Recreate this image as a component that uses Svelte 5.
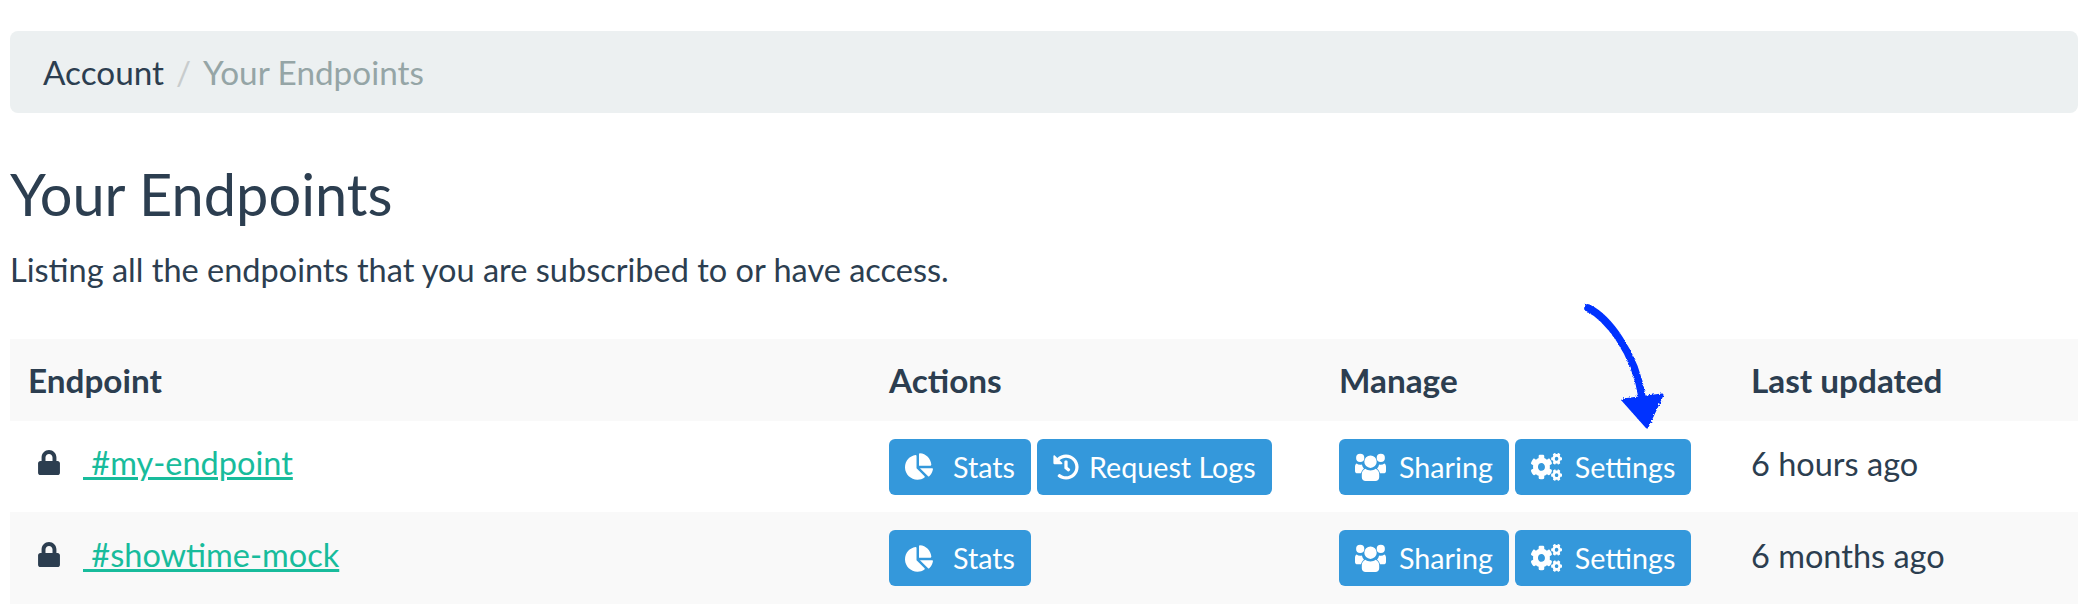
<script>
	const pie = { box: '0 0 544 512', w: 28, h: 27, gap: 20, d: 'M527.79 288H290.5l158.03 158.03c6.04 6.04 15.98 6.53 22.19.68 38.7-36.46 65.32-85.61 73.13-140.86 1.34-9.46-6.51-17.85-16.06-17.85zm-15.83-64.8C503.72 103.74 408.26 8.28 288.8.04 279.68-.59 272 7.1 272 16.24V240h223.77c9.14 0 16.82-7.68 16.19-16.8zM224 288V50.71c0-9.55-8.39-17.4-17.84-16.06C86.99 51.49-4.1 155.6.14 280.37 4.5 408.51 114.83 513.59 243.03 511.98c50.4-.63 96.97-16.87 135.26-44.03 7.9-5.6 8.42-17.23 1.57-24.08L224 288z' };
	const history = { box: '0 0 512 512', w: 26, h: 26, gap: 10, d: 'M504 255.531c.253 136.64-111.18 248.372-247.82 248.468-59.015.042-113.223-20.53-155.822-54.911-11.077-8.94-11.905-25.541-1.839-35.607l11.267-11.267c8.609-8.609 22.353-9.551 31.891-1.984C173.062 425.135 212.781 440 256 440c101.705 0 184-82.311 184-184 0-101.705-82.311-184-184-184-48.814 0-93.149 18.969-126.068 49.932l50.754 50.754c10.08 10.08 2.941 27.314-11.313 27.314H24c-8.837 0-16-7.163-16-16V38.627c0-14.254 17.234-21.393 27.314-11.314l49.372 49.372C129.209 34.136 189.552 8 256 8c136.81 0 247.747 110.78 248 247.531zm-180.912 78.784l9.823-12.63c8.138-10.463 6.253-25.542-4.21-33.679L288 256.349V152c0-13.255-10.745-24-24-24h-16c-13.255 0-24 10.745-24 24v135.651l65.409 50.874c10.463 8.137 25.541 6.253 33.679-4.21z' };
	// drawn to the taller proportions of the original icon
	const users = { box: '0 0 31 28', w: 31, h: 28, gap: 13, d: 'M15.5 2.5a6.2 6.2 0 1 1 0 12.4a6.2 6.2 0 0 1 0-12.4zM5.2 0.8a4.1 4.1 0 1 1 0 8.2a4.1 4.1 0 0 1 0-8.2zM25.8 0.8a4.1 4.1 0 1 1 0 8.2a4.1 4.1 0 0 1 0-8.2zM1.6 10.6c1 .8 2.2 1.2 3.6 1.2c.6 0 1.2-.1 1.7-.2c.3 1.6 1 3 2.1 4.1c-1.5 1-2.6 2.6-3 4.6H2.4C1 20.300 0 19.300 0 17.900v-4.200c0-1.300.6-2.400 1.600-3.100zM29.400 10.600c1 .7 1.600 1.800 1.600 3.100v4.200c0 1.400-1 2.400-2.400 2.400h-3.600c-.4-2-1.500-3.600-3-4.600c1.100-1.100 1.800-2.500 2.100-4.100c.5.1 1.100.2 1.700.2c1.400 0 2.600-.4 3.600-1.200zM10.300 15.800c1.400 1.100 3.200 1.700 5.200 1.700s3.800-.6 5.200-1.700c2.200 1 3.500 3 3.500 5.500v2.900c0 2.200-1.600 3.800-3.800 3.800H10.600c-2.200 0-3.800-1.600-3.800-3.800v-2.900c0-2.500 1.300-4.500 3.500-5.500z' };
	const cogs = { box: '0 0 640 512', w: 31, h: 28, gap: 13, fit: 'none', d: 'M512.1 191l-8.2 14.3c-3 5.3-9.4 7.5-15.1 5.4-11.8-4.4-22.6-10.7-32.1-18.6-4.6-3.8-5.8-10.5-2.8-15.7l8.2-14.3c-6.9-8-12.3-17.3-15.9-27.4h-16.5c-6 0-11.2-4.3-12.2-10.3-2-12-2.1-24.6 0-37.1 1-6 6.2-10.4 12.2-10.4h16.5c3.6-10.1 9-19.4 15.9-27.4l-8.2-14.3c-3-5.2-1.9-11.9 2.8-15.7 9.5-7.9 20.4-14.2 32.1-18.6 5.7-2.1 12.1.1 15.1 5.4l8.2 14.3c10.5-1.9 21.2-1.9 31.7 0L552 6.3c3-5.3 9.4-7.5 15.1-5.4 11.8 4.4 22.6 10.7 32.1 18.6 4.6 3.8 5.8 10.5 2.8 15.7l-8.2 14.3c6.9 8 12.3 17.3 15.9 27.4h16.5c6 0 11.2 4.3 12.2 10.3 2 12 2.1 24.6 0 37.1-1 6-6.2 10.4-12.2 10.4h-16.5c-3.6 10.1-9 19.4-15.9 27.4l8.2 14.3c3 5.2 1.9 11.9-2.8 15.7-9.5 7.9-20.4 14.2-32.1 18.6-5.7 2.1-12.1-.1-15.1-5.4l-8.2-14.3c-10.4 1.9-21.2 1.9-31.7 0zm-10.5-58.8c38.5 29.6 82.4-14.3 52.8-52.8-38.5-29.7-82.4 14.3-52.8 52.8zM386.3 286.1l33.7 16.8c10.1 5.8 14.5 18.1 10.5 29.1-8.9 24.2-26.4 46.4-42.6 65.8-7.4 8.9-20.2 11.1-30.3 5.3l-29.1-16.8c-16 13.7-34.6 24.6-54.9 31.7v33.6c0 11.6-8.3 21.6-19.7 23.6-24.6 4.2-50.4 4.4-75.9 0-11.5-2-20-11.9-20-23.6V418c-20.3-7.2-38.9-18-54.9-31.7L74 403c-10 5.8-22.9 3.6-30.3-5.3-16.2-19.4-33.3-41.6-42.2-65.7-4-10.9.4-23.2 10.5-29.1l33.3-16.8c-3.9-20.9-3.9-42.4 0-63.4L12 205.8c-10.1-5.8-14.6-18.1-10.5-29 8.9-24.2 26-46.4 42.2-65.8 7.4-8.9 20.2-11.1 30.3-5.3l29.1 16.8c16-13.7 34.6-24.6 54.9-31.7V57.1c0-11.5 8.2-21.5 19.6-23.5 24.6-4.2 50.5-4.4 76-.1 11.5 2 20 11.9 20 23.6v33.6c20.3 7.2 38.9 18 54.9 31.7l29.1-16.8c10-5.8 22.9-3.6 30.3 5.3 16.2 19.4 33.2 41.6 42.1 65.8 4 10.9.1 23.2-10 29.1l-33.7 16.8c3.9 21 3.9 42.5 0 63.5zm-117.6 21.1c59.2-77-28.7-164.9-105.7-105.7-59.2 77 28.7 164.9 105.7 105.7zm243.4 182.7l-8.2 14.3c-3 5.3-9.4 7.5-15.1 5.4-11.8-4.4-22.6-10.7-32.1-18.6-4.6-3.8-5.8-10.5-2.8-15.7l8.2-14.3c-6.9-8-12.3-17.3-15.9-27.4h-16.5c-6 0-11.2-4.3-12.2-10.3-2-12-2.1-24.6 0-37.1 1-6 6.2-10.4 12.2-10.4h16.5c3.6-10.1 9-19.4 15.9-27.4l-8.2-14.3c-3-5.2-1.9-11.9 2.8-15.7 9.5-7.9 20.4-14.2 32.1-18.6 5.7-2.1 12.1.1 15.1 5.4l8.2 14.3c10.5-1.9 21.2-1.9 31.7 0l8.2-14.3c3-5.3 9.4-7.5 15.1-5.4 11.8 4.4 22.6 10.7 32.1 18.6 4.6 3.8 5.8 10.5 2.8 15.7l-8.2 14.3c6.9 8 12.3 17.3 15.9 27.4h16.5c6 0 11.2 4.3 12.2 10.3 2 12 2.1 24.6 0 37.1-1 6-6.2 10.4-12.2 10.4h-16.5c-3.6 10.1-9 19.4-15.9 27.4l8.2 14.3c3 5.2 1.9 11.9-2.8 15.7-9.5 7.9-20.4 14.2-32.1 18.6-5.7 2.1-12.1-.1-15.1-5.4l-8.2-14.3c-10.4 1.9-21.2 1.9-31.7 0zM501.6 431c38.5 29.6 82.4-14.3 52.8-52.8-38.5-29.6-82.4 14.3-52.8 52.8z' };
	const lock = 'M400 224h-24v-72C376 68.2 307.8 0 224 0S72 68.2 72 152v72H48c-26.5 0-48 21.5-48 48v192c0 26.5 21.5 48 48 48h352c26.5 0 48-21.5 48-48V272c0-26.5-21.5-48-48-48zm-104 0H152v-72c0-39.7 32.3-72 72-72s72 32.3 72 72v72z';

	const endpoints = [
		{ name: '#my-endpoint', updated: '6 hours ago', actions: [{ label: 'Stats', icon: pie }, { label: 'Request Logs', icon: history }] },
		{ name: '#showtime-mock', updated: '6 months ago', actions: [{ label: 'Stats', icon: pie }] },
	];
	const manage = [{ label: 'Sharing', icon: users }, { label: 'Settings', icon: cogs }];
</script>

{#snippet btn(b)}
	<a class="btn" href="#top">
		<svg viewBox={b.icon.box} preserveAspectRatio={b.icon.fit ?? 'xMidYMid meet'} style="width: {b.icon.w}px; height: {b.icon.h}px; margin-right: {b.icon.gap}px"><path d={b.icon.d} /></svg>{b.label}
	</a>
{/snippet}

<div class="page">
	<nav class="crumbs">
		<a href="#top">Account</a>
		<span class="sep">/</span>
		<span class="here">Your Endpoints</span>
	</nav>

	<h1>Your Endpoints</h1>
	<p class="lead">Listing all the endpoints that you are subscribed to or have access.</p>

	<table>
		<thead>
			<tr>
				<th class="c1">Endpoint</th>
				<th class="c2">Actions</th>
				<th class="c3">Manage</th>
				<th>Last updated</th>
			</tr>
		</thead>
		<tbody>
			{#each endpoints as ep}
				<tr>
					<td>
						<div class="name">
							<svg class="lock" viewBox="0 0 448 512"><path d={lock} /></svg>
							<a href="#top">&nbsp;{ep.name}</a>
						</div>
					</td>
					<td><div class="btns">{#each ep.actions as b}{@render btn(b)}{/each}</div></td>
					<td><div class="btns">{#each manage as b}{@render btn(b)}{/each}</div></td>
					<td class="when">{ep.updated}</td>
				</tr>
			{/each}
		</tbody>
	</table>

	<!-- hand drawn annotation over the table -->
	<svg class="arrow" viewBox="0 0 110 140" width="110" height="140">
		<defs>
			<filter id="rough" x="-10%" y="-10%" width="120%" height="120%">
				<feTurbulence type="fractalNoise" baseFrequency="0.9" numOctaves="2" seed="4" />
				<feDisplacementMap in="SourceGraphic" scale="4" />
			</filter>
		</defs>
		<g filter="url(#rough)" fill="#0433ff" stroke="#0433ff" stroke-linejoin="round" stroke-linecap="round">
			<path d="M11 11 C30 20 58 55 65 100" fill="none" stroke-width="7.5" />
			<path d="M46 103 L85 98 L70 130 Z" stroke-width="3" />
		</g>
	</svg>
</div>

<style>
	:global(body) {
		margin: 0;
		background: #fff;
		font-family: Lato, "Liberation Sans", sans-serif;
		color: #2c3e50;
	}
	.page {
		position: relative;
		padding: 31px 0 0 10px;
		height: 577px;
		overflow: hidden;
	}
	.crumbs {
		display: flex;
		align-items: center;
		gap: 12px;
		width: 2035px;
		height: 82px;
		padding-left: 33px;
		background: #ecf0f1;
		border-radius: 8px;
		font-size: 33.3px;
	}
	.crumbs a {
		color: #2c3e50;
		text-decoration: none;
	}
	.sep {
		color: #c8cccd;
	}
	.here {
		color: #95a5a6;
	}
	h1 {
		margin: 50px 0 0;
		font-size: 57.7px;
		font-weight: 400;
		line-height: 62px;
	}
	.lead {
		margin: 25px 0 0;
		font-size: 32.5px;
		line-height: 40px;
	}
	table {
		width: 2068px;
		margin-top: 49px;
		border-collapse: collapse;
		table-layout: fixed;
		font-size: 32.5px;
	}
	th {
		box-sizing: border-box;
		height: 82px;
		padding: 0 0 0 18px;
		background: #f9f9f9;
		text-align: left;
		font-size: 33.3px;
		font-weight: 700;
	}
	td {
		box-sizing: border-box;
		padding: 0 0 0 18px;
		height: 91px;
	}
	tbody tr:nth-child(even) td {
		height: 92px;
		background: #f9f9f9;
	}
	.c1 { width: 861px; }
	.c2 { width: 450px; }
	.c3 { width: 412px; }
	.name {
		display: flex;
		align-items: center;
		margin-top: -8px;
		padding-left: 10px;
	}
	.lock {
		width: 22px;
		height: 25px;
		margin-right: 23px;
		fill: #2c3e50;
	}
	.name a {
		color: #18bc9c;
	}
	.btns {
		display: flex;
		gap: 6px;
	}
	.btn {
		display: flex;
		align-items: center;
		height: 56px;
		padding: 0 16px;
		background: #3498db;
		border-radius: 6px;
		color: #fff;
		font-size: 28.7px;
		text-decoration: none;
	}
	.btn svg {
		fill: #fff;
	}
	.when {
		padding-bottom: 6px;
	}
	.arrow {
		position: absolute;
		left: 1577px;
		top: 297px;
	}
</style>
